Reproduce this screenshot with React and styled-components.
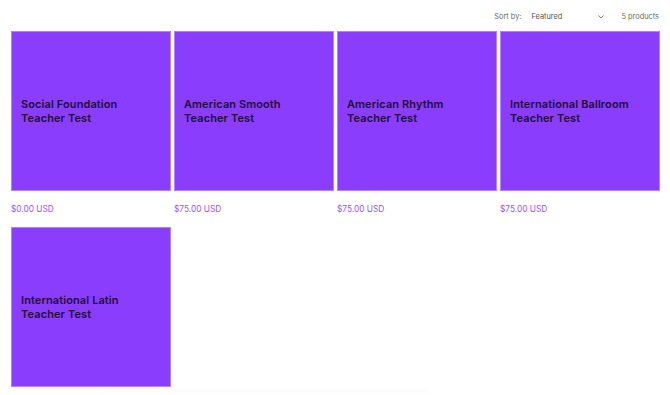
import React from "react";
import styled, { createGlobalStyle } from "styled-components";

const Global = createGlobalStyle`
  html, body { margin: 0; padding: 0; background: #fff; }
  body { font-family: Inter, "Noto Sans", sans-serif; overflow: hidden; }
`;

const Page = styled.div`
  position: relative;
  width: 670px;
  height: 395px;
  padding: 0 10px 0 11px;
  box-sizing: border-box;
`;

const Toolbar = styled.div`
  display: flex;
  justify-content: flex-end;
  align-items: center;
  height: 31px;
  padding: 2px 1px 0 0;
  box-sizing: border-box;
  font-size: 7.4px;
  color: #6b6b6b;
`;

const SortLabel = styled.span`
  margin-right: 10px;
`;

const Select = styled.div`
  display: flex;
  align-items: center;
  width: 73px;
  justify-content: space-between;
  margin-right: 17px;
  color: #555;
`;

const Grid = styled.div`
  display: grid;
  grid-template-columns: repeat(4, 160px);
  column-gap: 3px;
  row-gap: 0;
`;

const Card = styled.div`
  display: flex;
  flex-direction: column;
`;

const Tile = styled.div`
  width: 160px;
  height: 160px;
  box-sizing: border-box;
  background: #8a3dfd;
  border: 1px solid #b383ff;
  display: flex;
  align-items: center;
  padding: 0 10px 0 9px;
`;

const Title = styled.div`
  font-size: 11px;
  font-weight: 600;
  line-height: 14px;
  color: #1e0f38;
  letter-spacing: 0.1px;
`;

const Price = styled.div`
  height: 36px;
  display: flex;
  align-items: center;
  font-size: 8.3px;
  color: #9a55ff;
`;

const Shade = styled.div`
  position: absolute;
  left: 105px;
  width: 325px;
  bottom: -6px;
  height: 8px;
  box-shadow: 0 -2px 6px rgba(0, 0, 0, 0.025);
  background: #fefefe;
`;

const products = [
  { name: ["Social Foundation", "Teacher Test"], price: "$0.00 USD" },
  { name: ["American Smooth", "Teacher Test"], price: "$75.00 USD" },
  { name: ["American Rhythm", "Teacher Test"], price: "$75.00 USD" },
  { name: ["International Ballroom", "Teacher Test"], price: "$75.00 USD" },
  { name: ["International Latin", "Teacher Test"], price: "$75.00 USD" },
];

export default function App() {
  return (
    <Page>
      <Global />
      <Toolbar>
        <SortLabel>Sort by:</SortLabel>
        <Select>
          <span>Featured</span>
          <svg width="6" height="4" viewBox="0 0 6 4" fill="none">
            <path d="M0.5 0.5 L3 3 L5.5 0.5" stroke="#777" strokeWidth="0.9" />
          </svg>
        </Select>
        <span>5 products</span>
      </Toolbar>
      <Grid>
        {products.map((p, i) => (
          <Card key={i}>
            <Tile>
              <Title>
                {p.name[0]}
                <br />
                {p.name[1]}
              </Title>
            </Tile>
            {i < 4 && <Price>{p.price}</Price>}
          </Card>
        ))}
      </Grid>
      <Shade />
    </Page>
  );
}
